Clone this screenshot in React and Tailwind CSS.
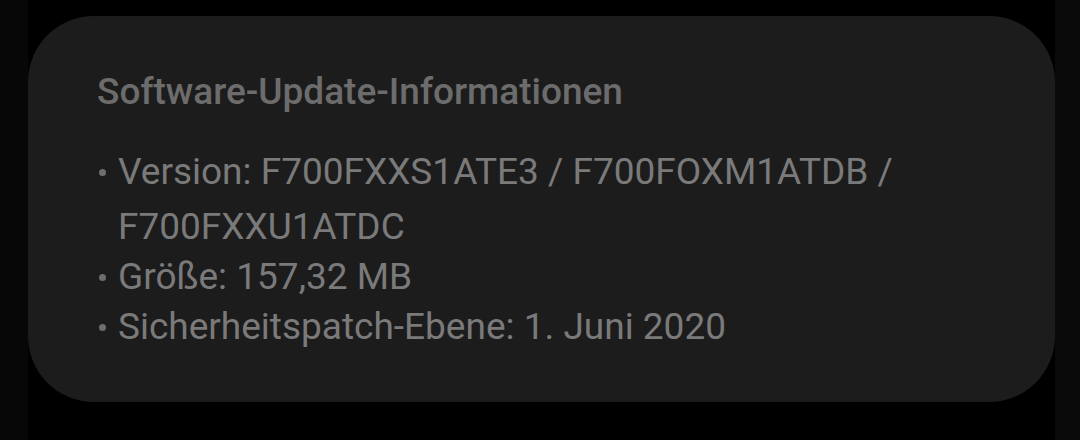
export default function App() {
    const items = [
        "Version: F700FXXS1ATE3 / F700FOXM1ATDB / F700FXXU1ATDC",
        "Größe: 157,32 MB",
        "Sicherheitspatch-Ebene: 1. Juni 2020",
    ];

    return (
        <div className="flex h-[440px] w-[1080px] bg-black" style={{ fontFamily: "Roboto, 'Noto Sans', sans-serif" }}>
            <div className="w-[28px] bg-[#070707]" />
            <div className="flex-1 pt-[16px]">
                <div className="h-[386px] rounded-[66px] bg-[#1c1c1c] pl-[69px] pr-[60px] pt-[52px]">
                    <h2 className="text-[37px] font-medium leading-[48px] text-[#6c6c6c]">Software-Update-Informationen</h2>
                    <ul className="mt-[28px] text-[37px] leading-[55px] text-[#7a7a7a]">
                        {items.map((item, i) => (
                            <li key={item} className={i === 0 ? "flex" : "-mt-[5px] flex"}>
                                <span className="flex h-[55px] w-[21px] shrink-0 items-center pl-[2px] pt-[2px]">
                                    <span className="h-[7px] w-[7px] rounded-full bg-[#6e6e6e]" />
                                </span>
                                <span className="max-w-[820px]">{item}</span>
                            </li>
                        ))}
                    </ul>
                </div>
            </div>
            <div className="w-[25px] bg-[#0a0a0a]" />
        </div>
    );
}
